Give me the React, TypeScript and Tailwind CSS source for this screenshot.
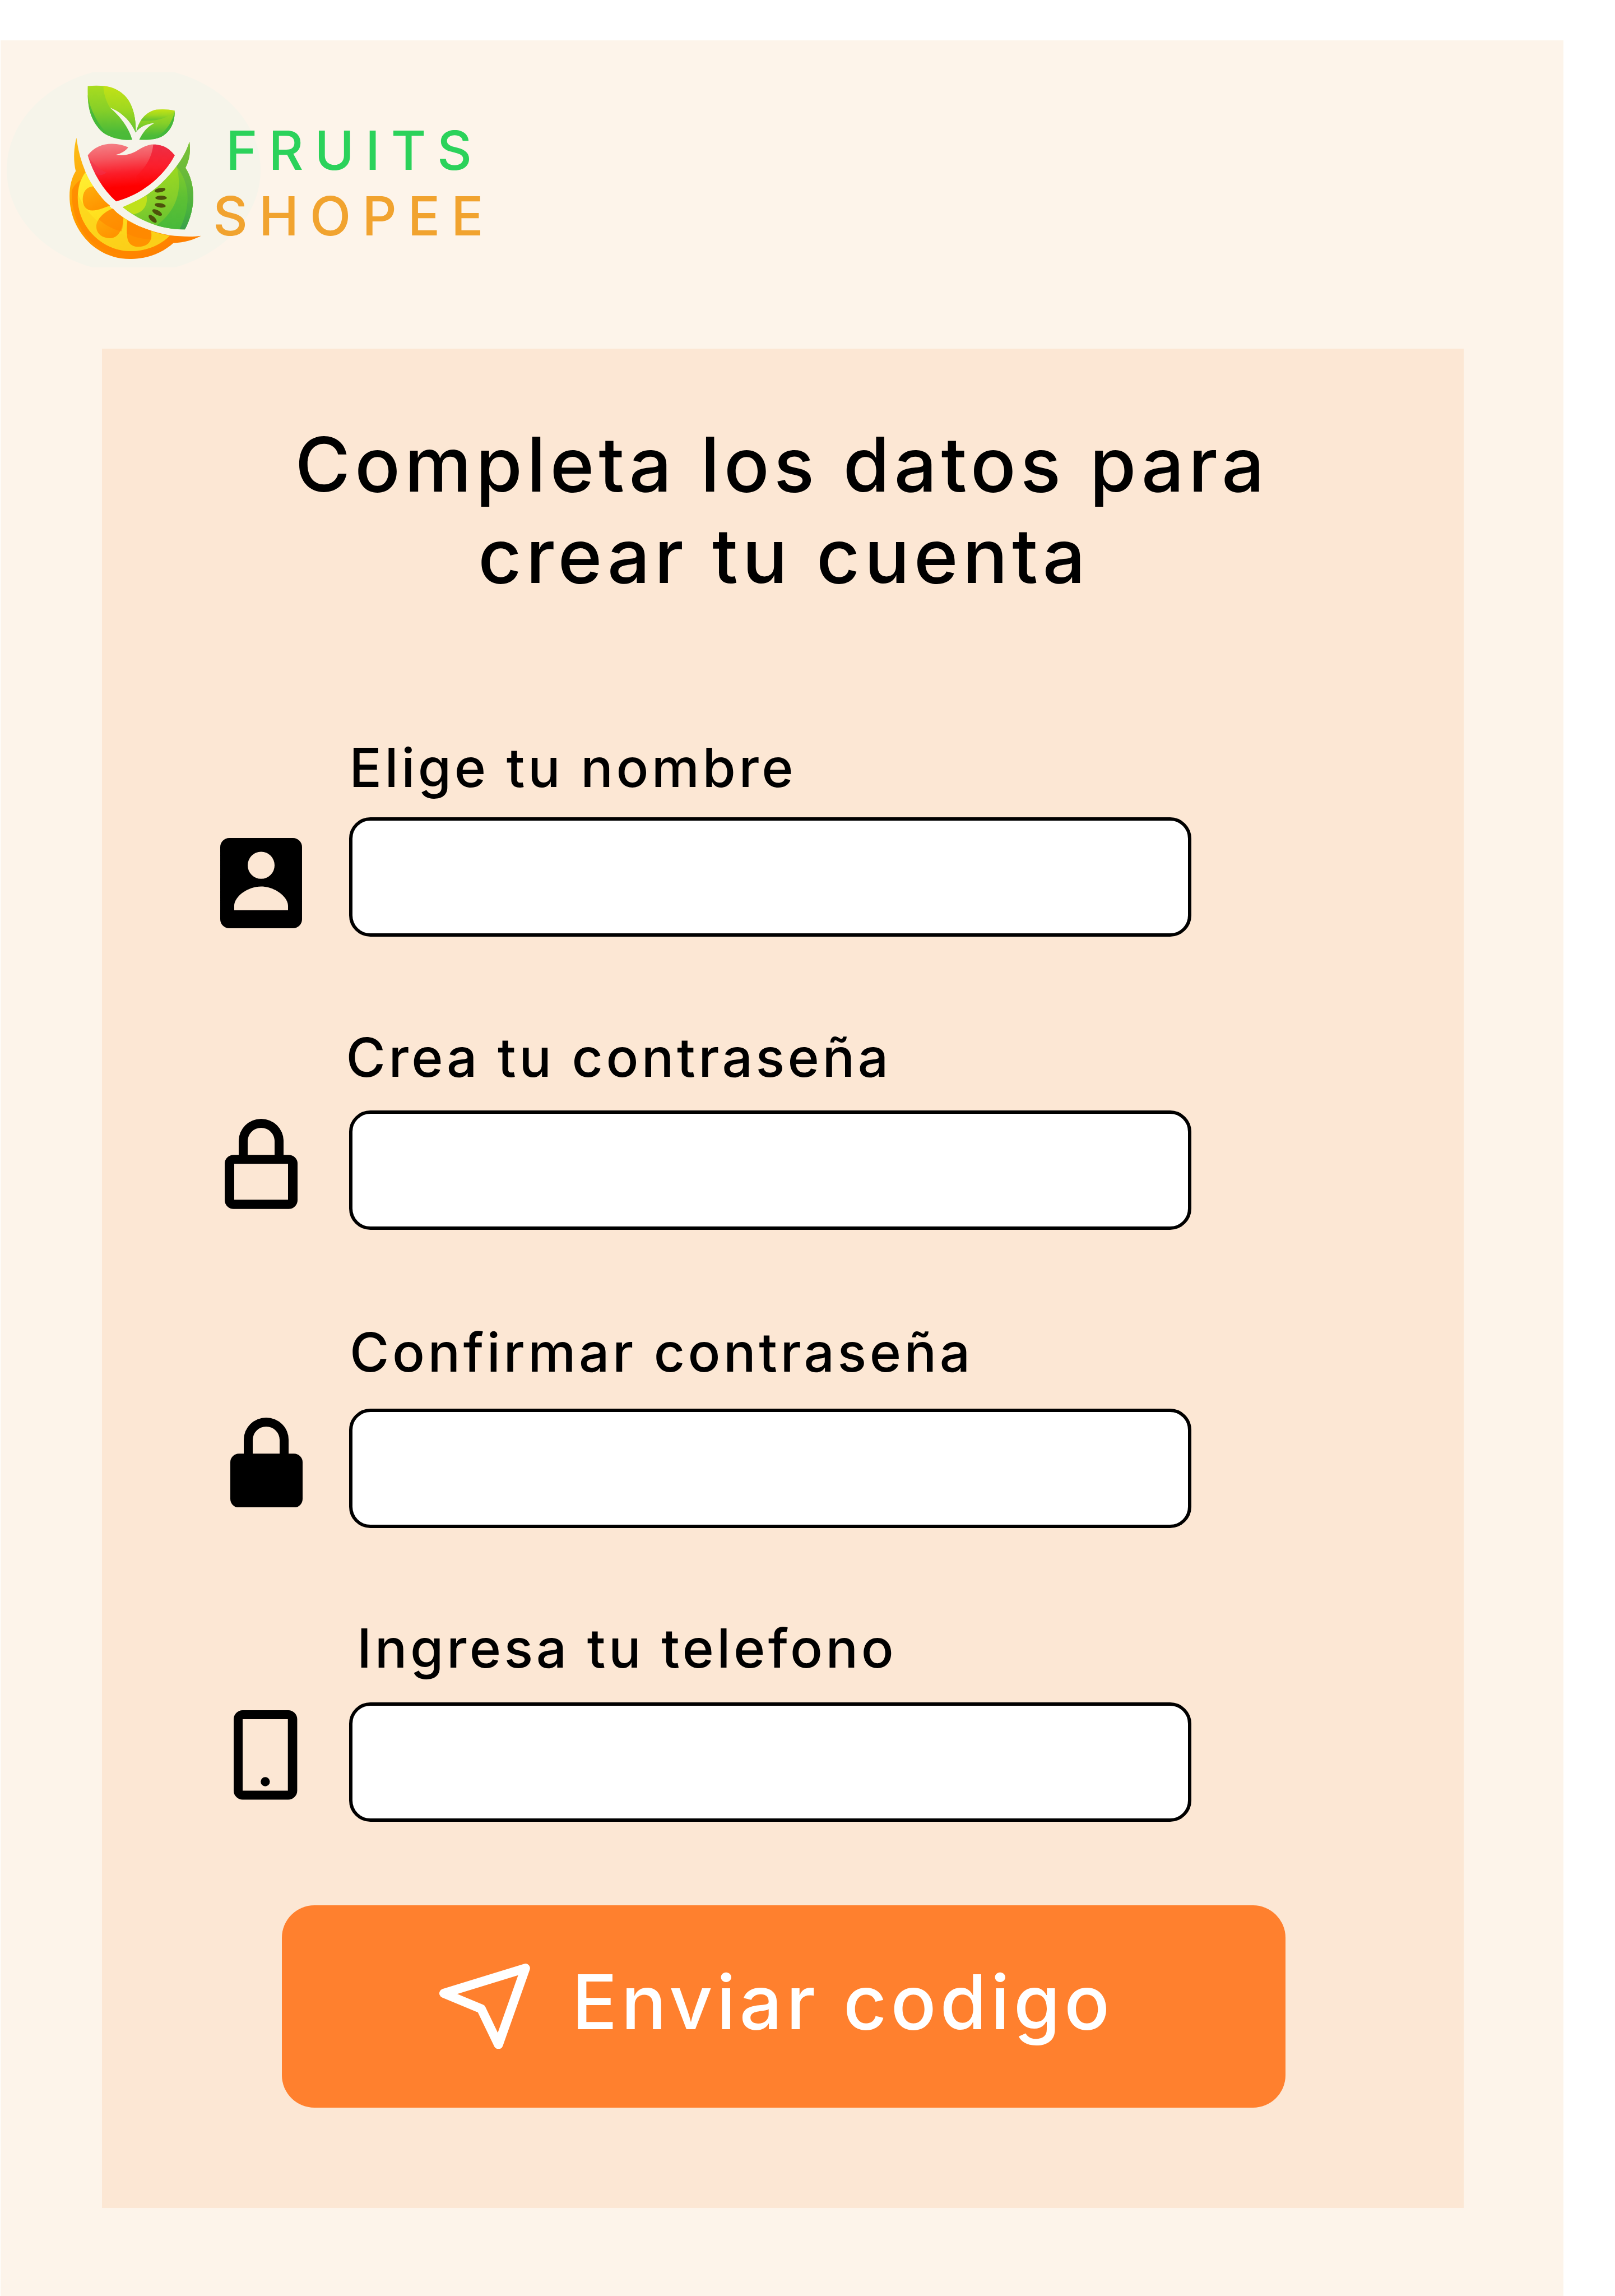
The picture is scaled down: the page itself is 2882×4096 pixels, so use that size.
import type { ReactNode } from "react";

function FruitMark() {
  return (
    <svg viewBox="-292 -18 1416 1086" className="h-[348px] w-[453px] shrink-0" aria-hidden="true">
      <defs>
        <linearGradient id="leaf" x1="0" y1="0" x2="0" y2="1">
          <stop offset="0" stopColor="#a9dc1f" />
          <stop offset="0.45" stopColor="#86cf28" />
          <stop offset="0.85" stopColor="#4dbb38" />
          <stop offset="1" stopColor="#48ba38" />
        </linearGradient>
        <linearGradient id="leafLight" x1="0" y1="0" x2="0" y2="1">
          <stop offset="0" stopColor="#c3e215" />
          <stop offset="0.5" stopColor="#9fd820" />
          <stop offset="1" stopColor="#62c231" />
        </linearGradient>
        <linearGradient id="leafDark" x1="0" y1="0" x2="0" y2="1">
          <stop offset="0" stopColor="#7ccb2c" />
          <stop offset="0.5" stopColor="#45b83c" />
          <stop offset="1" stopColor="#48ba38" />
        </linearGradient>
        <linearGradient id="heart" x1="0.3" y1="0" x2="0.42" y2="1">
          <stop offset="0" stopColor="#f47f84" />
          <stop offset="0.25" stopColor="#f5565f" />
          <stop offset="0.5" stopColor="#fb1f2b" />
          <stop offset="0.75" stopColor="#ff0000" />
          <stop offset="1" stopColor="#fb0000" />
        </linearGradient>
        <linearGradient id="heartSide" x1="0" y1="0" x2="0" y2="1">
          <stop offset="0" stopColor="#ec2f46" />
          <stop offset="0.5" stopColor="#fb1f2d" />
          <stop offset="1" stopColor="#ff0000" stopOpacity="0" />
        </linearGradient>
        <linearGradient id="peel" x1="0" y1="0" x2="0.6" y2="1">
          <stop offset="0" stopColor="#fcc01a" />
          <stop offset="0.45" stopColor="#ffa000" />
          <stop offset="1" stopColor="#ff8000" />
        </linearGradient>
        <linearGradient id="pulp" x1="0" y1="0" x2="0.5" y2="1">
          <stop offset="0" stopColor="#fff034" />
          <stop offset="0.5" stopColor="#ffe11f" />
          <stop offset="1" stopColor="#fbce17" />
        </linearGradient>
        <linearGradient id="segment" x1="0" y1="0" x2="0.5" y2="1">
          <stop offset="0" stopColor="#ffae0c" />
          <stop offset="1" stopColor="#ff9400" />
        </linearGradient>
        <linearGradient id="kiwi" gradientUnits="userSpaceOnUse" x1="560" y1="560" x2="640" y2="840">
          <stop offset="0" stopColor="#98d722" />
          <stop offset="0.5" stopColor="#84cd2b" />
          <stop offset="1" stopColor="#5fc032" />
        </linearGradient>
        <linearGradient id="kiwiShade" gradientUnits="userSpaceOnUse" x1="670" y1="500" x2="670" y2="860">
          <stop offset="0" stopColor="#86cd2c" />
          <stop offset="0.5" stopColor="#5dc034" />
          <stop offset="1" stopColor="#47b93a" />
        </linearGradient>
        <linearGradient id="rim" x1="0" y1="0" x2="0" y2="1">
          <stop offset="0" stopColor="#7dc338" />
          <stop offset="0.4" stopColor="#68b93a" />
          <stop offset="0.8" stopColor="#46b03f" />
          <stop offset="1" stopColor="#379c4c" />
        </linearGradient>
        <clipPath id="orangeClip">
          <path d="M147 538C95 610 90 720 135 810C190 920 300 982 410 978C490 975 565 945 617 892C480 868 380 815 300 745C235 690 175 600 147 538Z" />
        </clipPath>
        <clipPath id="heartClip">
          <path d="M160 444C195 400 240 380 295 380L645 444C600 530 500 650 318 701C245 635 190 545 160 444Z" />
        </clipPath>
        <clipPath id="kiwiClip">
          <path d="M727 368C735 420 728 470 705 514C762 600 765 740 702 857C570 860 450 810 355 733C500 680 590 590 655 505C690 460 715 410 727 368Z" />
        </clipPath>
      </defs>
      <ellipse cx="416" cy="525" rx="708" ry="575" fill="#f6f4ea" />

      <path fill="url(#leaf)" d="M160 58C250 48 320 65 365 110C410 155 430 230 428 318C400 250 345 200 283 177C340 225 390 290 408 358C330 362 255 340 215 285C165 225 158 140 160 58Z" />
      <path fill="url(#leafLight)" d="M247 56C300 62 340 84 365 110C410 155 430 230 428 318C400 250 345 200 283 177C262 140 248 100 247 56Z" />
      <path fill="url(#leafDark)" d="M160 105C172 190 215 270 280 336C252 325 232 309 215 285C172 230 160 165 160 105Z" />
      <path fill="url(#leaf)" d="M430 314C445 250 480 205 540 190C575 186 615 188 645 195C648 260 620 310 580 335C540 358 490 360 447 357C465 320 490 285 532 264C490 268 450 285 430 314Z" />
      <path fill="url(#leafLight)" d="M456 250C475 222 505 198 540 190C575 186 615 188 645 195C610 235 550 256 456 250Z" />
      <path fill="#45b83c" d="M645 200C646 262 620 310 580 335C560 347 540 352 520 355C580 330 630 270 645 200Z" />

      <path fill="url(#heart)" d="M160 444C195 400 240 380 295 380C330 381 360 388 386 399C370 420 345 435 316 441C365 448 400 440 440 415C480 390 510 380 545 384C590 390 620 412 645 444C600 530 500 650 318 701C245 635 190 545 160 444Z" />
      <path fill="url(#heartSide)" d="M525 384C590 384 620 412 645 444C620 495 570 560 500 610C460 620 430 600 430 560C485 510 520 450 525 384Z" />
      <g clipPath="url(#heartClip)">
        <path fill="#f2304c" opacity="0.5" d="M160 446C185 490 220 520 265 540C240 560 215 560 200 540C180 510 168 480 160 446Z" />
      </g>

      <path fill="url(#peel)" d="M97 346C80 410 80 480 93 532C50 600 45 720 90 820C150 950 270 1025 405 1022C500 1020 580 985 638 933C700 930 750 915 792 893C740 900 680 897 617 890C480 865 380 815 300 745C230 685 165 590 143 525C120 470 105 410 97 346Z" />
      <path fill="#ff8400" opacity="0.7" d="M72 640C62 780 140 950 300 985C400 1005 500 990 590 930L617 892C560 945 490 975 410 978C300 982 190 920 135 810C100 740 95 650 120 580C95 600 78 620 72 640Z" />
      <path fill="url(#pulp)" d="M147 538C95 610 90 720 135 810C190 920 300 982 410 978C490 975 565 945 617 892C480 868 380 815 300 745C235 690 175 600 147 538Z" />
      <g clipPath="url(#orangeClip)">
        <path fill="#fbd01a" opacity="0.6" d="M104 660C180 830 330 920 560 912L617 892L560 990L300 990L120 860Z" />
      </g>
      <path fill="url(#segment)" d="M190 617C150 620 132 650 132 690C132 730 155 752 185 752C225 750 250 735 285 725C240 690 215 650 190 617Z" />
      <path fill="url(#segment)" d="M300 741C260 755 215 790 208 835C205 880 240 905 285 906C330 905 355 860 359 792C335 775 315 760 300 741Z" />
      <path fill="#ff9100" d="M381 806C378 850 378 880 380 900C385 935 405 953 440 954C485 954 512 935 515 895C515 880 515 870 513 864C460 848 420 829 381 806Z" />
      <path fill="#ff8400" opacity="0.55" d="M381 806C378 838 377 860 378 880C420 902 470 912 514 912C516 895 515 875 513 864C460 848 420 829 381 806ZM300 741C275 750 240 775 222 802C260 835 300 858 348 868C357 845 358 820 359 792C335 775 315 760 300 741Z" />

      <path fill="url(#kiwi)" d="M727 368C735 420 728 470 705 514C762 600 765 740 702 857C570 860 450 810 355 733C500 680 590 590 655 505C690 460 715 410 727 368Z" />
      <g clipPath="url(#kiwiClip)">
        <path fill="url(#kiwiShade)" d="M655 500C682 610 680 730 545 835L700 880L760 700L740 560Z" />
        <path fill="url(#rim)" d="M727 350L655 508C725 590 745 720 665 870L790 870L790 350Z" />
      </g>
      <path fill="#bfe01b" d="M355 733C405 710 450 692 488 667C497 715 475 762 415 773C393 761 374 748 355 733Z" />
      <g fill="#4d510b">
        <ellipse cx="563" cy="638" rx="31" ry="12" transform="rotate(-11 563 638)" />
        <ellipse cx="569" cy="681" rx="32" ry="12" />
        <ellipse cx="564" cy="723" rx="31" ry="12" transform="rotate(9 564 723)" />
        <ellipse cx="547" cy="763" rx="30" ry="13" transform="rotate(28 547 763)" />
        <ellipse cx="522" cy="798" rx="29" ry="13" transform="rotate(44 522 798)" />
      </g>
    </svg>
  );
}

const PersonIcon = () => (
  <svg viewBox="87 168 456 503" className="ml-[211.3px] mt-[36.5px] h-[161px] w-[146px]" fillRule="evenodd" aria-hidden="true">
    <path d="M137 168H493A50 50 0 0 1 543 218V621A50 50 0 0 1 493 671H137A50 50 0 0 1 87 621V218A50 50 0 0 1 137 168ZM315 244.500A75 75.500 0 0 0 315 395.500A75 75.500 0 0 0 315 244.500ZM165 570V546C165 494 240 438 315 438S465 494 465 546V570Z" />
  </svg>
);

const LockOutlineIcon = () => (
  <svg viewBox="112 85 406 502" className="ml-[219.3px] mt-[15.5px] h-[160.7px] w-[130px]" fillRule="evenodd" aria-hidden="true">
    <path d="M190 286V208A125 123 0 0 1 440 208V286H468A50 48 0 0 1 518 334V539A50 48 0 0 1 468 587H162A50 48 0 0 1 112 539V334A50 48 0 0 1 162 286ZM240 286H390V209A75 74 0 0 0 240 209ZM165 336V536H465V336Z" />
  </svg>
);

const LockIcon = () => (
  <svg viewBox="145 127 403 501" className="ml-[229.8px] mt-[15.5px] h-[160.4px] w-[129px]" fillRule="evenodd" aria-hidden="true">
    <path d="M220 328V250A125 123 0 0 1 470 250V328H500A48 48 0 0 1 548 376V580A48 48 0 0 1 500 628H193A48 48 0 0 1 145 580V376A48 48 0 0 1 193 328ZM270 328H420V251A75 74 0 0 0 270 251Z" />
  </svg>
);

const PhoneIcon = () => (
  <svg viewBox="163 109 354 498" className="ml-[235.6px] mt-[13.8px] h-[159.5px] w-[113.4px]" fillRule="evenodd" aria-hidden="true">
    <path d="M213 109H467A50 50 0 0 1 517 159V557A50 50 0 0 1 467 607H213A50 50 0 0 1 163 557V159A50 50 0 0 1 213 109ZM213 159V557H465V159Z" />
    <circle cx="339" cy="507" r="25.5" />
  </svg>
);

const SendIcon = () => (
  <svg viewBox="815.6 3646.8 168.8 159" className="mt-[103.7px] h-[152.7px] w-[162.2px] shrink-0" aria-hidden="true">
    <path
      d="M824 3702L975.6 3655.4L925.4 3797.2L893.5 3731Z"
      fill="none"
      stroke="#fff"
      strokeWidth="16.9"
      strokeLinejoin="round"
    />
  </svg>
);

type FieldProps = {
  label: string;
  icon: ReactNode;
  spacing: string;
  labelClass: string;
};

function Field({ label, icon, spacing, labelClass }: FieldProps) {
  return (
    <div className={spacing}>
      <label className={`block h-[116px] whitespace-nowrap text-[96px] leading-[116px] tracking-[0.057em] ${labelClass}`}>
        {label}
      </label>
      <div className="flex h-[213px] items-start">
        <div className="w-[441px] shrink-0">{icon}</div>
        <input className="h-[213px] w-[1503.4px] rounded-[38px] border-[6px] border-black bg-white" aria-label={label} />
      </div>
    </div>
  );
}

export default function App() {
  return (
    <div className="h-[4096px] w-[2882px] overflow-hidden bg-white pl-px pt-[72px] font-['Inter',sans-serif] font-medium text-black">
      <main className="h-[4024px] w-[2789.4px] bg-[#fdf4ea] pl-[180.6px]">
        <header className="-ml-[180.6px] flex h-[549.5px] items-start pl-[11.3px] pt-[56.7px]">
          <FruitMark />
          <div className="z-10 -ml-[85.3px] mt-[81.3px] text-[96px] leading-[117px] tracking-[0.205em]">
            <div className="pl-[23px] text-[#2bd25b]">FRUITS</div>
            <div className="text-[#f1a32f]">SHOPEE</div>
          </div>
        </header>

        <section className="flex h-[3317.8px] w-[2430.4px] flex-col bg-[#fce7d4]">
          <h1 className="-ml-[3px] mt-[125px] text-center text-[134.5px] leading-[163.3px] tracking-[0.0575em]">
            Completa los datos para
            <br />
            <span className="pl-[7px]">crear tu cuenta</span>
          </h1>

          <Field label="Elige tu nombre" icon={<PersonIcon />} spacing="mt-[238px] [&>label]:mb-[31px]" labelClass="pl-[441.6px]" />
          <Field label="Crea tu contraseña" icon={<LockOutlineIcon />} spacing="mt-[156.6px] [&>label]:mb-[37.1px]" labelClass="pl-[436px]" />
          <Field label="Confirmar contraseña" icon={<LockIcon />} spacing="mt-[160.6px] [&>label]:mb-[42.8px]" labelClass="pl-[442.5px]" />
          <Field label="Ingresa tu telefono" icon={<PhoneIcon />} spacing="mt-[155.7px] [&>label]:mb-[39.4px]" labelClass="pl-[455.5px]" />

          <button className="ml-[321.4px] mt-[148.6px] flex h-[361.2px] w-[1791px] shrink-0 items-start rounded-[58px] bg-[#ff802e] pl-[280.6px] text-left text-white">
            <SendIcon />
            <span className="ml-[74.7px] mt-[91px] whitespace-nowrap text-[134.5px] leading-[163px] tracking-[0.052em]">Enviar codigo</span>
          </button>
        </section>
      </main>
    </div>
  );
}
